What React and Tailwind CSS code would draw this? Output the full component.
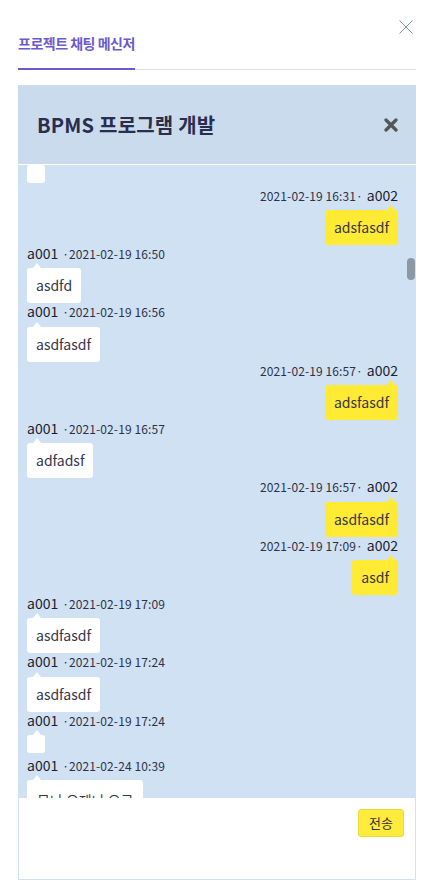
import React from "react";

const FONT = { fontFamily: '"Noto Sans CJK KR", "Noto Sans", sans-serif' };

function Tail({ side }) {
  return (
    <span
      className={
        "absolute top-[-5px] w-0 h-0 border-l-[4px] border-r-[4px] border-b-[5px] border-l-transparent border-r-transparent " +
        (side === "left" ? "left-[6px] border-b-white" : "right-[3px] border-b-[#ffeb33]")
      }
    />
  );
}

function Meta({ side, name, time }) {
  if (side === "left") {
    return (
      <div className="h-[17.33px] flex items-baseline text-[#2e3046] whitespace-nowrap">
        <span className="text-[14px] leading-[17px] font-normal text-[#1c1d30]">{name}</span>
        <span className="text-[12px] leading-[17px] ml-[4px] tracking-[0.1px]">·{time}</span>
      </div>
    );
  }
  return (
    <div className="h-[17.33px] flex items-baseline text-[#2e3046] whitespace-nowrap">
      <span className="text-[12px] leading-[17px] tracking-[0.1px]">{time}·</span>
      <span className="text-[14px] leading-[17px] font-normal ml-[4px] text-[#1c1d30]">{name}</span>
    </div>
  );
}

function Bubble({ side, text, noTail, extra }) {
  return (
    <div
      className={
        "relative rounded-[3px] p-[9px] text-[14px] leading-[17px] text-[#35364a] whitespace-pre " +
        (side === "left" ? "bg-white " : "bg-[#ffeb33] ") +
        (extra || "")
      }
    >
      {!noTail && <Tail side={side} />}
      {text}
    </div>
  );
}

function Msg({ side, name, time, text, extra }) {
  return (
    <div className={"flex flex-col " + (side === "left" ? "items-start" : "items-end")}>
      <Meta side={side} name={name} time={time} />
      <div className={"mt-[6px] " + (text ? "" : "mb-[3.67px]")}>
        <Bubble side={side} text={text} extra={extra} />
      </div>
    </div>
  );
}

const messages = [
  { side: "right", name: "a002", time: "2021-02-19 16:31", text: "adsfasdf" },
  { side: "left", name: "a001", time: "2021-02-19 16:50", text: "asdfd" },
  { side: "left", name: "a001", time: "2021-02-19 16:56", text: "asdfasdf" },
  { side: "right", name: "a002", time: "2021-02-19 16:57", text: "adsfasdf" },
  { side: "left", name: "a001", time: "2021-02-19 16:57", text: "adfadsf" },
  { side: "right", name: "a002", time: "2021-02-19 16:57", text: "asdfasdf" },
  { side: "right", name: "a002", time: "2021-02-19 17:09", text: "asdf" },
  { side: "left", name: "a001", time: "2021-02-19 17:09", text: "asdfasdf" },
  { side: "left", name: "a001", time: "2021-02-19 17:24", text: "asdfasdf" },
  { side: "left", name: "a001", time: "2021-02-19 17:24", text: "" },
  { side: "left", name: "a001", time: "2021-02-24 10:39", text: "무나 오제나 오근", extra: "pt-[12px] px-[10px]" },
];

export default function App() {
  return (
    <div className="relative w-[434px] h-[896px] bg-white overflow-hidden" style={FONT}>
      <button className="absolute top-[19px] left-[398px] w-[16px] h-[16px] flex items-center justify-center">
        <svg width="16" height="16" viewBox="0 0 16 16">
          <path d="M1.5 1.5 L14.5 14.5 M14.5 1.5 L1.5 14.5" stroke="#8a97a8" strokeWidth="1" fill="none" />
        </svg>
      </button>

      <div className="mx-[18px] pt-[33px] flex border-b border-[#dddddd]">
        <div className="w-[117px] pb-[15px] mb-[-1px] border-b-2 border-[#6a5acd] text-[14px] leading-[20px] font-bold tracking-[-0.5px] text-[#6a5acd] whitespace-nowrap">
          프로젝트 채팅 메신저
        </div>
      </div>

      <div className="mx-[18px] mt-[15px] flex flex-col">
        <div className="h-[80px] bg-[#c9dbed] border-b border-white flex items-center justify-between pl-[19px] pr-[18px]">
          <div className="text-[20px] font-bold text-[#2a2d4e] leading-[28px] tracking-[0.2px]">BPMS 프로그램 개발</div>
          <svg width="14" height="14" viewBox="0 0 14 14">
            <path d="M2 2 L12 12 M12 2 L2 12" stroke="#555555" strokeWidth="3.2" strokeLinecap="round" fill="none" />
          </svg>
        </div>

        <div className="relative h-[633px] overflow-hidden bg-[#d0e1f3] pl-[9px] pr-[18px] flex flex-col">
          <div className="flex flex-col items-start">
            <div className="mb-[3.67px]">
              <Bubble side="left" text="" noTail />
            </div>
          </div>
          {messages.map((m, i) => (
            <Msg key={i} {...m} />
          ))}
          <div className="absolute top-[93px] right-[1px] w-[8px] h-[22px] rounded-full bg-[#8c98a5]" />
        </div>

        <div className="h-[82px] bg-white border border-t-0 border-[#cfe1f3] flex justify-end items-start pt-[11px] pr-[11px]">
          <button className="h-[28px] px-[10px] rounded-[3px] bg-[#ffeb3b] border border-[#eed83a] text-[13px] text-[#333333] leading-[26px]">
            전송
          </button>
        </div>
      </div>
    </div>
  );
}
